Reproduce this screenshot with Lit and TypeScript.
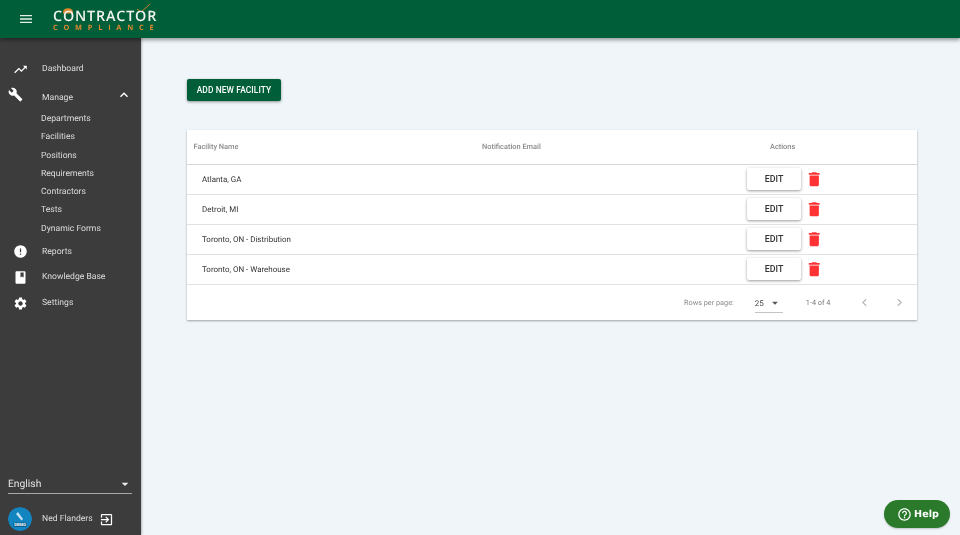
import { LitElement, html, css } from "lit";
import { customElement } from "lit/decorators.js";

const icon = (d: string, cls = "ic") => html`<svg class=${cls} viewBox="0 0 24 24" fill="currentColor"><path d=${d}></path></svg>`;
const P = {
  menu: "M3 18h18v-2H3v2zm0-5h18v-2H3v2zm0-7v2h18V6H3z",
  trend: "M16 6l2.29 2.29-4.88 4.88-4-4L2 16.59 3.41 18l6-6 4 4 6.3-6.29L22 12V6z",
  wrench: "M22.7 19l-9.1-9.1c.9-2.3.4-5-1.5-6.9-2-2-5-2.4-7.4-1.3L9 6 6 9 1.600 4.700C.4 7.100.9 10.100 2.900 12.100c1.900 1.900 4.600 2.400 6.900 1.500l9.100 9.100c.4.400 1 .4 1.400 0l2.300-2.300c.5-.4.500-1.100.100-1.400z",
  up: "M7.410 15.410L12 10.830l4.590 4.580L18 14l-6-6-6 6z",
  alert: "M12 2C6.480 2 2 6.480 2 12s4.480 10 10 10 10-4.480 10-10S17.520 2 12 2zm1 15h-2v-2h2v2zm0-4h-2V7h2v6z",
  book: "M18 2H6c-1.100 0-2 .9-2 2v16c0 1.100.9 2 2 2h12c1.100 0 2-.9 2-2V4c0-1.100-.9-2-2-2zM12 4h5v8l-2.500-1.500L12 12V4z",
  gear: "M19.140 12.940c.04-.3.06-.61.06-.94 0-.32-.02-.64-.07-.94l2.030-1.580c.18-.14.23-.41.12-.61l-1.920-3.320c-.12-.22-.37-.29-.59-.22l-2.390.96c-.5-.38-1.030-.7-1.620-.94l-.36-2.540c-.04-.24-.24-.41-.48-.41h-3.840c-.24 0-.43.17-.47.41l-.36 2.540c-.59.24-1.130.57-1.620.94l-2.390-.96c-.22-.08-.47 0-.59.22L2.740 8.870c-.12.21-.08.47.12.61l2.030 1.580c-.05.3-.09.63-.09.94s.02.64.07.94l-2.030 1.580c-.18.14-.23.41-.12.61l1.920 3.320c.12.22.37.29.59.22l2.390-.96c.5.38 1.030.7 1.620.94l.36 2.540c.05.24.24.41.48.41h3.840c.24 0 .44-.17.47-.41l.36-2.540c.59-.24 1.130-.56 1.620-.94l2.390.96c.22.08.47 0 .59-.22l1.920-3.320c.12-.22.07-.47-.12-.61l-2.010-1.580zM12 15.600c-1.980 0-3.600-1.620-3.600-3.600s1.620-3.600 3.600-3.600 3.600 1.620 3.600 3.600-1.620 3.600-3.600 3.600z",
  exit: "M10.090 15.590L11.500 17l5-5-5-5-1.410 1.410L12.670 11H3v2h9.670l-2.580 2.590zM19 3H5c-1.110 0-2 .9-2 2v4h2V5h14v14H5v-4H3v4c0 1.100.89 2 2 2h14c1.100 0 2-.9 2-2V5c0-1.100-.9-2-2-2z",
  trash: "M6 19c0 1.100.9 2 2 2h8c1.100 0 2-.9 2-2V7H6v12zM19 4h-3.500l-1-1h-5l-1 1H5v2h14V4z",
  left: "M15.410 7.410L14 6l-6 6 6 6 1.410-1.410L10.830 12z",
  right: "M10 6L8.590 7.410 13.170 12l-4.580 4.590L10 18l6-6z",
  drop: "M7 10l5 5 5-5z",
  help: "M11 18h2v-2h-2v2zm1-16C6.480 2 2 6.480 2 12s4.480 10 10 10 10-4.480 10-10S17.520 2 12 2zm0 18c-4.410 0-8-3.590-8-8s3.590-8 8-8 8 3.590 8 8-3.590 8-8 8zm0-14c-2.210 0-4 1.790-4 4h2c0-1.100.9-2 2-2s2 .9 2 2c0 2-3 1.750-3 5h2c0-2.250 3-2.500 3-5 0-2.210-1.790-4-4-4z",
};

@customElement("app-root")
export class AppRoot extends LitElement {
  static styles = css`
    :host { display: block; width: 960px; height: 535px; overflow: hidden; position: relative; font-family: Roboto, "Liberation Sans", sans-serif; background: #f0f5f9; text-rendering: geometricPrecision; }
    * { box-sizing: border-box; }
    .t { will-change: opacity; }
    .ic { width: 24px; height: 24px; display: block; flex: none; }
    header { position: relative; z-index: 2; height: 38px; background: #005e38; box-shadow: 0 2px 4px rgba(0,0,0,.4); display: flex; align-items: center; padding-left: 18px; color: #fff; }
    header > .ic { width: 16px; height: 16px; color: #e8efe9; }
    .logo { margin-left: 19px; width: 104px; display: flex; flex-direction: column; align-items: flex-start; position: relative; padding-top: 3px; }
    .logo .a { font: 600 14.300px/11px "Open Sans", sans-serif; letter-spacing: .85px; color: #f1f4f1; white-space: nowrap; }
    .logo .b { font: 700 7.400px/6px "Open Sans", sans-serif; letter-spacing: 5.750px; color: #dc8a30; white-space: nowrap; margin-top: 3px; }
    .logo svg { position: absolute; left: 0; top: -2px; width: 104px; height: 14px; overflow: visible; }
    .body { display: flex; height: 497px; }
    aside { width: 141px; flex: none; background: #3c3c3c; color: #dedede; display: flex; flex-direction: column; padding-top: 17px; box-shadow: 1px 0 2px rgba(0,0,0,.25); font-size: 8.600px; }
    .nav { display: flex; align-items: center; height: 28.500px; padding-left: 13px; position: relative; }
    .nav .ic { width: 15px; height: 15px; color: #fff; }
    .nav span { margin-left: 14px; }
    .nav.m { height: 26.500px; padding-top: 1.500px; }
    .nav.m .ic.w { width: 15px; height: 15px; margin: -6px 1px 0 -5px; }
    .nav.m span { margin-left: 18px; }
    .nav.m .ic.c { position: absolute; left: 116px; top: 3.500px; width: 16px; height: 16px; }
    .sub { display: flex; flex-direction: column; padding-left: 41px; }
    .sub div { height: 18.300px; line-height: 18.300px; }
    .tall { height: 25.750px; }
    .first { margin-top: .7px; }
    .spacer { flex: 1; }
    .lang { margin: 0 9px 0 8px; height: 20px; border-bottom: 1px solid #a8a8a8; display: flex; align-items: center; justify-content: space-between; font-size: 10.300px; color: #e4e4e4; }
    .lang .ic { width: 16px; height: 16px; margin-right: -1px; color: #eee; }
    .user { display: flex; align-items: center; margin-top: 13px; margin-bottom: 4px; padding-left: 8px; }
    .avatar { width: 24px; height: 24px; border-radius: 50%; display: block; flex: none; }
    .user span { margin-left: 10px; }
    .user .ic { width: 15px; height: 15px; margin-left: 6.500px; color: #fff; }
    main { flex: 1; padding: 41px 43px 0 46px; }
    .add { display: block; border: 0; width: 94px; height: 22px; border-radius: 2px; background: #005e38; box-shadow: 0 1px 3px rgba(0,0,0,.4); padding: 0; }
    .add div { color: #fff; font: 500 8.400px Roboto, sans-serif; letter-spacing: .1px; }
    .card { margin-top: 29px; background: #fff; width: 730px; box-shadow: 0 1px 2px rgba(0,0,0,.35); }
    .row { display: grid; grid-template-columns: 295px 265px 1fr; align-items: center; height: 30px; padding-bottom: 1px; border-bottom: 1px solid #e2e2e2; font-size: 7.950px; color: #333; }
    .row.h { height: 35px; border-bottom-color: #d8d8d8; font-size: 7.400px; font-weight: 500; color: #8a8a8a; }
    .row.h > div:first-child { padding-left: 6.500px; }
    .row > div:first-child { padding-left: 15px; }
    .row.h .act { padding-left: 23px; }
    .act { display: flex; align-items: center; }
    .edit { width: 54px; height: 22px; border: 0; border-radius: 2px; background: #fff; box-shadow: 0 1px 3px rgba(0,0,0,.4); padding: 0; }
    .edit div { color: #333; font: 500 8.900px Roboto, sans-serif; }
    .act .ic { width: 18.500px; height: 18.500px; margin-left: 3.500px; color: #f33; }
    .foot { height: 35px; display: flex; align-items: center; font-size: 7.300px; color: #8a8a8a; padding-left: 497px; }
    .sel { margin-left: 21px; width: 28px; height: 19px; border-bottom: 1px solid #c4c4c4; display: flex; align-items: center; color: #444; font-size: 8px; position: relative; top: 1px; }
    .sel .ic { width: 14px; height: 14px; margin-left: 4px; color: #555; }
    .range { margin-left: 23px; color: #777; }
    .foot .ic.l { margin-left: 27px; width: 15px; height: 15px; color: #b8b8b8; }
    .foot .ic.r { margin-left: 20px; width: 15px; height: 15px; color: #b8b8b8; }
    .help { position: absolute; left: 884px; top: 500px; width: 66px; height: 28px; border-radius: 14px; background: #2b7a2b; color: #fff; display: flex; align-items: center; padding-left: 12.500px; font: 700 9.600px "DejaVu Sans", sans-serif; letter-spacing: .1px; box-shadow: 0 1px 2px rgba(0,0,0,.2); }
    .help .ic { width: 15px; height: 15px; margin-right: 2.500px; }
  `;

  render() {
    const subs = ["Departments", "Facilities", "Positions", "Requirements", "Contractors", "Tests", "Dynamic Forms"];
    const rows = ["Atlanta, GA", "Detroit, MI", "Toronto, ON - Distribution", "Toronto, ON - Warehouse"];
    return html`
      <header>
        ${icon(P.menu)}
        <div class="logo">
          <svg viewBox="0 0 104 14" fill="none">
            <path d="M10 6.500c0-2.800 2.200-4.200 5-4.200s5 1.400 5 4.200v1h-10z" fill="#e08a2c"></path>
            <path d="M84 3l4 3 9-8" stroke="#c9802f" stroke-width="1"></path>
          </svg>
          <div class="a t">CONTRACTOR</div>
          <div class="b t">COMPLIANCE</div>
        </div>
      </header>
      <div class="body">
        <aside>
          <div class="nav">${icon(P.trend)}<span class="t">Dashboard</span></div>
          <div class="nav m">${icon(P.wrench, "ic w")}<span class="t">Manage</span>${icon(P.up, "ic c")}</div>
          <div class="sub">${subs.map((s) => html`<div class="t">${s}</div>`)}</div>
          <div class="nav tall first">${icon(P.alert)}<span class="t">Reports</span></div>
          <div class="nav tall">${icon(P.book)}<span class="t">Knowledge Base</span></div>
          <div class="nav tall">${icon(P.gear)}<span class="t">Settings</span></div>
          <div class="spacer"></div>
          <div class="lang"><div class="t">English</div>${icon(P.drop)}</div>
          <div class="user">
            <svg class="avatar" viewBox="0 0 24 24">
              <circle cx="12" cy="12" r="12" fill="#1284c0"></circle>
              <path d="M8 7l2-2 5 7-1.500 1.500z" fill="#bfe0f0"></path>
              <rect x="5" y="15.500" width="14" height="4.500" rx="2" fill="#0b5f8f"></rect>
              <text x="12" y="19" text-anchor="middle" font-size="4.200" font-weight="700" fill="#fff" font-family="Roboto">DEMO</text>
            </svg>
            <span class="t">Ned Flanders</span>${icon(P.exit)}
          </div>
        </aside>
        <main>
          <button class="add"><div class="t">ADD NEW FACILITY</div></button>
          <div class="card">
            <div class="row h"><div class="t">Facility Name</div><div class="t">Notification Email</div><div class="act"><span class="t">Actions</span></div></div>
            ${rows.map((r) => html`<div class="row"><div class="t">${r}</div><div></div><div class="act"><button class="edit"><div class="t">EDIT</div></button>${icon(P.trash)}</div></div>`)}
            <div class="foot">
              <span class="t">Rows per page:</span>
              <div class="sel"><span class="t">25</span>${icon(P.drop)}</div>
              <span class="range t">1-4 of 4</span>
              ${icon(P.left, "ic l")}${icon(P.right, "ic r")}
            </div>
          </div>
        </main>
      </div>
      <div class="help">${icon(P.help)}<span class="t">Help</span></div>
    `;
  }
}
